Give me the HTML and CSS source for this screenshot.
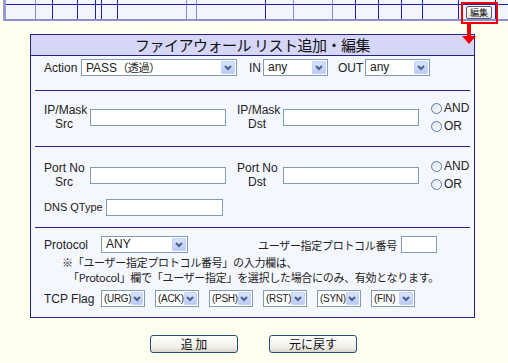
FILE: index.html
```html
<!DOCTYPE html>
<html lang="ja">
<head>
    <meta charset="UTF-8">
    <title>ファイアウォール リスト追加・編集</title>
    <link rel="stylesheet" href="styles.css">
</head>
<body>
    <!-- 一覧テーブル（下端のみ表示） -->
    <div class="list">
        <div class="list-row first">
            <div class="c lt"></div><div class="c"></div><div class="c"></div><div class="c"></div><div class="c"></div><div class="c"></div>
            <div class="c lt"></div><div class="c lt"></div><div class="c"></div><div class="c lt"></div><div class="c lt"></div><div class="c"></div>
            <div class="c"></div><div class="c"></div><div class="c"></div><div class="c"></div><div class="c"></div><div class="c"></div>
        </div>
        <div class="list-row">
            <div class="c lt"></div><div class="c"></div><div class="c"></div><div class="c"></div><div class="c"></div><div class="c"></div>
            <div class="c lt"></div><div class="c lt"></div><div class="c"></div><div class="c lt"></div><div class="c lt"></div><div class="c"></div>
            <div class="c"></div><div class="c"></div><div class="c"></div><div class="c"></div>
            <div class="c btn-cell"><button class="edit-btn">編集</button></div>
            <div class="c"></div>
        </div>
    </div>
    <div class="mark"></div>
    <div class="arrow"><div class="arrow-stem"></div><div class="arrow-head"></div></div>

    <div class="dialog">
        <div class="dlg-title">ファイアウォール リスト追加・編集</div>

        <div class="sec sec-action">
            <div class="row">
                <span class="lbl lbl-action">Action</span>
                <div class="sel sel-action"><span class="val">PASS<span class="jp">（透過）</span></span><span class="arr"><svg width="8" height="6" viewBox="0 0 8 6"><path d="M1 1 L4 4 L7 1" fill="none" stroke="#4d6185" stroke-width="2"/></svg></span></div>
                <span class="lbl lbl-in">IN</span>
                <div class="sel sel-dir"><span class="val">any</span><span class="arr"><svg width="8" height="6" viewBox="0 0 8 6"><path d="M1 1 L4 4 L7 1" fill="none" stroke="#4d6185" stroke-width="2"/></svg></span></div>
                <span class="lbl lbl-out">OUT</span>
                <div class="sel sel-dir"><span class="val">any</span><span class="arr"><svg width="8" height="6" viewBox="0 0 8 6"><path d="M1 1 L4 4 L7 1" fill="none" stroke="#4d6185" stroke-width="2"/></svg></span></div>
            </div>
        </div>
        <div class="sep"></div>

        <div class="sec sec-ip">
            <div class="row pair">
                <span class="lbl2 lbl-src">IP/Mask<br>Src</span>
                <input class="txt txt-addr" type="text">
                <span class="lbl2 lbl-dst">IP/Mask<br>Dst</span>
                <input class="txt txt-addr" type="text">
                <div class="radios">
                    <label class="rd"><span class="circle"></span>AND</label>
                    <label class="rd"><span class="circle"></span>OR</label>
                </div>
            </div>
        </div>
        <div class="sep"></div>

        <div class="sec sec-port">
            <div class="row pair">
                <span class="lbl2 lbl-src">Port No<br>Src</span>
                <input class="txt txt-addr" type="text">
                <span class="lbl2 lbl-dst">Port No<br>Dst</span>
                <input class="txt txt-addr" type="text">
                <div class="radios">
                    <label class="rd"><span class="circle"></span>AND</label>
                    <label class="rd"><span class="circle"></span>OR</label>
                </div>
            </div>
            <div class="row dns-row">
                <span class="lbl lbl-dns">DNS QType</span>
                <input class="txt txt-dns" type="text">
            </div>
        </div>
        <div class="sep"></div>

        <div class="sec sec-proto">
            <div class="row">
                <span class="lbl lbl-proto">Protocol</span>
                <div class="sel sel-proto"><span class="val">ANY</span><span class="arr"><svg width="8" height="6" viewBox="0 0 8 6"><path d="M1 1 L4 4 L7 1" fill="none" stroke="#4d6185" stroke-width="2"/></svg></span></div>
                <span class="lbl jp lbl-user">ユーザー指定プロトコル番号</span>
                <input class="txt txt-num" type="text">
            </div>
            <div class="note">
                <p class="jp">※「ユーザー指定プロトコル番号」の入力欄は、</p>
                <p class="jp second">「Protocol」欄で「ユーザー指定」を選択した場合にのみ、有効となります。</p>
            </div>
            <div class="row flag-row">
                <span class="lbl lbl-proto">TCP Flag</span>
                <div class="flags">
                    <div class="sel sel-flag"><span class="val">(URG)</span><span class="arr"><svg width="8" height="6" viewBox="0 0 8 6"><path d="M1 1 L4 4 L7 1" fill="none" stroke="#4d6185" stroke-width="2"/></svg></span></div>
                    <div class="sel sel-flag"><span class="val">(ACK)</span><span class="arr"><svg width="8" height="6" viewBox="0 0 8 6"><path d="M1 1 L4 4 L7 1" fill="none" stroke="#4d6185" stroke-width="2"/></svg></span></div>
                    <div class="sel sel-flag"><span class="val">(PSH)</span><span class="arr"><svg width="8" height="6" viewBox="0 0 8 6"><path d="M1 1 L4 4 L7 1" fill="none" stroke="#4d6185" stroke-width="2"/></svg></span></div>
                    <div class="sel sel-flag"><span class="val">(RST)</span><span class="arr"><svg width="8" height="6" viewBox="0 0 8 6"><path d="M1 1 L4 4 L7 1" fill="none" stroke="#4d6185" stroke-width="2"/></svg></span></div>
                    <div class="sel sel-flag"><span class="val">(SYN)</span><span class="arr"><svg width="8" height="6" viewBox="0 0 8 6"><path d="M1 1 L4 4 L7 1" fill="none" stroke="#4d6185" stroke-width="2"/></svg></span></div>
                    <div class="sel sel-flag"><span class="val">(FIN)</span><span class="arr"><svg width="8" height="6" viewBox="0 0 8 6"><path d="M1 1 L4 4 L7 1" fill="none" stroke="#4d6185" stroke-width="2"/></svg></span></div>
                </div>
            </div>
        </div>
    </div>

    <div class="actions">
        <button class="btn">追 加</button>
        <button class="btn">元に戻す</button>
    </div>
</body>
</html>
```

FILE: styles.css
```css
body {
    margin: 0;
    background-color: #fffff0;
    font-family: "Liberation Sans", "Noto Sans CJK JP", sans-serif;
    font-size: 12px;
    color: #222;
    overflow: hidden;
    position: relative;
}
.list {
    margin-left: 3px;
    width: 505px;
    overflow: hidden;
    border-left: 3px solid #9a9ad6;
    border-bottom: 2px solid #8e8ed0;
    background-color: #f3f5fc;
}
.list-row {
    display: grid;
    grid-template-columns: 30px 17px 25px 18px 6px 16px 69px 10px 69px 28px 39px 23px 23px 23px 21px 36px 37px 40px;
    height: 14px;
}
.list-row.first {
    height: 5px;
}
.list-row.first .c {
    border-bottom: 1px solid #1e1ea6;
}
.c {
    box-sizing: border-box;
    border-right: 1px solid #1e1ea6;
}
.c.lt {
    border-right-color: #8c8cd0;
}
.btn-cell {
    display: flex;
    justify-content: flex-end;
    align-items: center;
    padding-right: 3px;
}
.edit-btn {
    width: 26px;
    height: 13px;
    padding: 0;
    font-family: "Noto Sans CJK JP", sans-serif;
    font-size: 9px;
    line-height: 11px;
    color: #111;
    background: linear-gradient(#ffffff, #e6e4dc);
    border: 1px solid #55596a;
    border-radius: 2px;
}
.mark {
    position: absolute;
    left: 461px;
    top: 2px;
    width: 37px;
    height: 22px;
    box-sizing: border-box;
    border: 2px solid #f00000;
    z-index: 2;
}
.arrow {
    position: absolute;
    left: 462px;
    top: 23px;
    width: 14px;
    z-index: 2;
}
.arrow-stem {
    width: 4px;
    height: 13px;
    margin-left: 5px;
    background-color: #f00000;
}
.arrow-head {
    width: 0;
    height: 0;
    border-left: 7px solid transparent;
    border-right: 7px solid transparent;
    border-top: 8px solid #f00000;
}
.dialog {
    margin: 13px 0 0 30px;
    width: 445px;
    box-sizing: border-box;
    border: 1px solid #23238c;
    background-color: #f5f7ff;
}
.dlg-title {
    height: 20px;
    line-height: 20px;
    text-align: center;
    font-family: "Noto Sans CJK JP", sans-serif;
    font-size: 15px;
    letter-spacing: -0.5px;
    color: #111;
    background-color: #d6d6f8;
    border-bottom: 1px solid #23238c;
}
.sep {
    height: 1px;
    margin: 0 4px;
    background-color: #23238c;
}
.sec {
    padding-left: 13px;
}
.sec-action {
    padding-top: 3px;
    padding-bottom: 14px;
}
.sec-ip {
    padding-top: 10px;
    padding-bottom: 13px;
}
.sec-port {
    padding-top: 12px;
    padding-bottom: 11px;
}
.sec-proto {
    padding-top: 8px;
    padding-bottom: 10px;
}
.row {
    display: flex;
    align-items: center;
    height: 17px;
}
.row.pair {
    height: 32px;
}
.dns-row {
    margin-top: 7px;
    height: 18px;
}
.flag-row {
    margin-top: 5px;
}
.lbl {
    line-height: 14px;
    white-space: nowrap;
}
.lbl2 {
    line-height: 14px;
    text-align: center;
    white-space: nowrap;
}
.jp {
    font-family: "Noto Sans CJK JP", sans-serif;
    font-size: 11px;
    letter-spacing: -0.3px;
}
.lbl-action { width: 37px; }
.lbl-in { width: 14px; margin-left: 12px; }
.lbl-out { width: 27px; margin-left: 10px; }
.lbl-src { width: 40px; margin-right: 6px; }
.lbl-dst { width: 40px; margin-left: 11px; margin-right: 6px; }
.lbl-dns { width: 62px; font-size: 11px; }
.lbl-proto { width: 57px; }
.lbl-user { margin-left: 70px; margin-right: 4px; }
.sel {
    display: flex;
    align-items: center;
    box-sizing: border-box;
    height: 17px;
    border: 1px solid #7f9db9;
    background-color: #fff;
    padding: 1px;
}
.sel .val {
    flex: 1;
    padding-left: 3px;
    line-height: 13px;
    white-space: nowrap;
}
.sel .arr {
    display: flex;
    align-items: center;
    justify-content: center;
    width: 14px;
    height: 13px;
    box-sizing: border-box;
    border: 1px solid #c3d3fd;
    border-radius: 1px;
    background: linear-gradient(#d8e3fd, #b9cbf6);
}
.sel-action { width: 156px; }
.sel-dir { width: 65px; }
.sel-proto { width: 87px; }
.sel-flag { width: 44px; }
.sel-flag .val {
    padding-left: 1px;
    font-size: 10px;
    letter-spacing: -0.3px;
}
.flags {
    display: flex;
    gap: 10px;
}
.txt {
    box-sizing: border-box;
    height: 17px;
    margin: 0;
    padding: 0 2px;
    border: 1px solid #7f9db9;
    background-color: #fff;
}
.txt-addr { width: 136px; }
.txt-dns { width: 117px; }
.txt-num { width: 36px; }
.radios {
    display: flex;
    flex-direction: column;
    gap: 5px;
    margin-left: 12px;
}
.rd {
    display: flex;
    align-items: center;
    gap: 2px;
    line-height: 13px;
}
.circle {
    width: 11px;
    height: 11px;
    box-sizing: border-box;
    border: 1px solid #5a7aa6;
    border-radius: 50%;
    background: linear-gradient(135deg, #dde3ea, #ffffff);
}
.note {
    margin-top: 2px;
    padding-left: 18px;
}
.note p {
    margin: 0;
    line-height: 15px;
}
.note .second {
    margin-left: 6px;
}
.actions {
    display: flex;
    gap: 31px;
    margin: 17px 0 0 150px;
}
.btn {
    width: 88px;
    height: 18px;
    padding: 0;
    font-family: "Noto Sans CJK JP", sans-serif;
    font-size: 12px;
    line-height: 16px;
    color: #111;
    background: linear-gradient(#ffffff, #efeee8 70%, #d9d5cb);
    border: 1px solid #2b4e7a;
    border-radius: 3px;
}
```
